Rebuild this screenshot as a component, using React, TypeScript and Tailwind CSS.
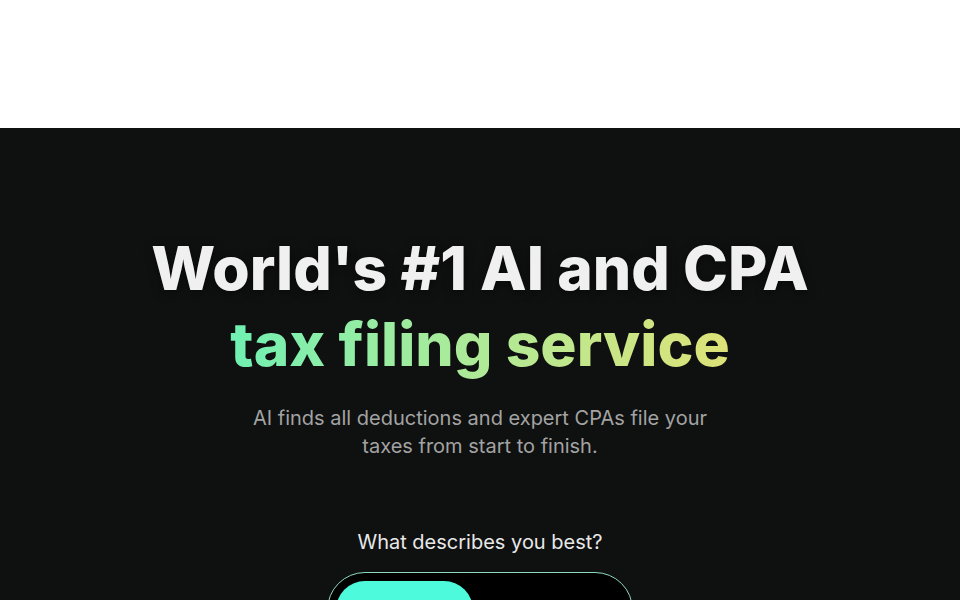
import React from "react";

const App = () => {
  return (
    <div className="min-h-screen bg-white font-['Inter','Noto_Sans',sans-serif]">
      {/* top white header area */}
      <div className="h-32 bg-white" />

      <section className="bg-[#0f1010] pt-[102px] pb-20">
        <div className="mx-auto flex max-w-[960px] flex-col items-center px-4 text-center">
          <h1 className="text-[60.5px] font-extrabold leading-[76px] text-[#f0f0f0]">
            <span className="[text-shadow:0_2px_10px_rgba(0,0,0,0.5)]">World's #1 AI and CPA</span>
            <br />
            <span className="bg-gradient-to-r from-[#6ff0b2] to-[#dde277] bg-clip-text text-transparent">
              tax filing service
            </span>
          </h1>

          <p className="mt-[22px] max-w-[470px] text-xl leading-7 text-[#a3a3a3]">
            AI finds all deductions and expert CPAs file your taxes from start to finish.
          </p>

          <p className="mt-[68px] text-xl leading-7 text-[#e8e8e8]">What describes you best?</p>

          <div className="mt-4 flex h-[76px] w-[306px] items-stretch rounded-full border border-[#8fd9c4] bg-black p-2">
            <button className="w-[137px] rounded-full bg-[#4dfadc] text-base font-semibold text-black">
              Individual
            </button>
            <button className="flex-1 rounded-full text-base font-semibold text-white">
              Business
            </button>
          </div>
        </div>
      </section>
    </div>
  );
};

export default App;
